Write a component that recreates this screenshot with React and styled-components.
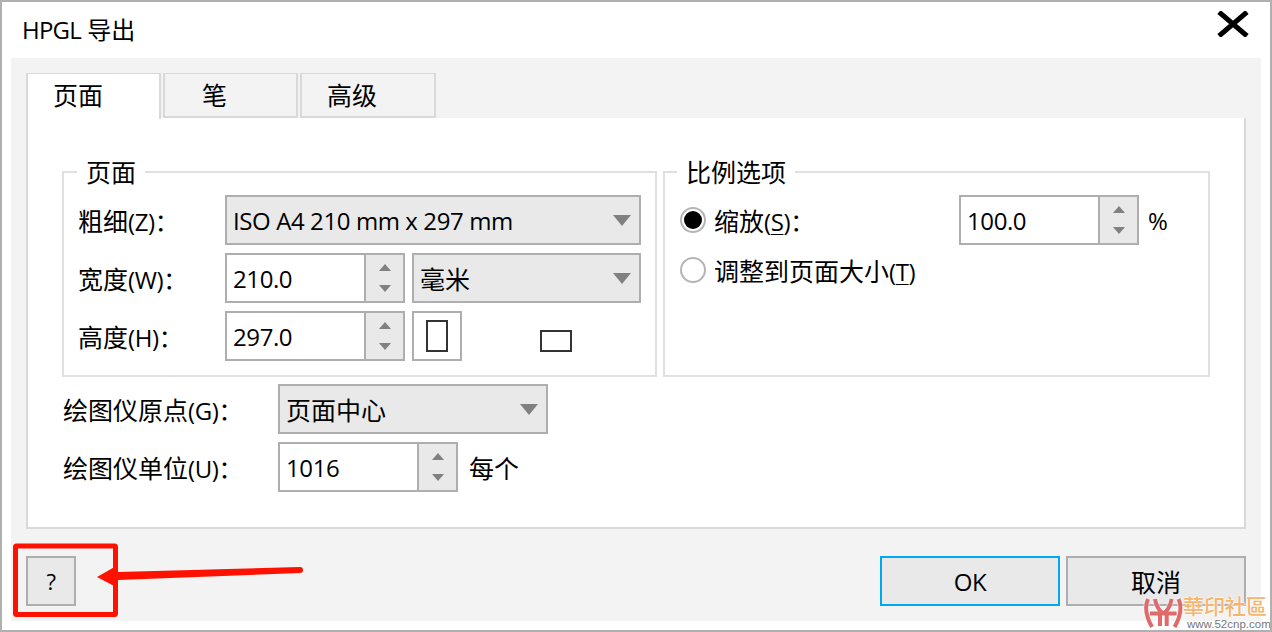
import React from 'react';
import styled, { createGlobalStyle } from 'styled-components';

const GlobalStyle = createGlobalStyle`
  html, body {
    margin: 0;
    padding: 0;
    background: #ffffff;
  }
  body {
    font-family: "Open Sans", "Noto Sans CJK SC", sans-serif;
    font-size: 25px;
    color: #000000;
  }
`;

const Latin = styled.span`
  font-size: ${(p) => p.$size || 24}px;
  letter-spacing: -0.4px;
`;

const Dialog = styled.div`
  position: relative;
  box-sizing: border-box;
  width: 1272px;
  height: 632px;
  border: 2px solid #b0b0b0;
  background: #ffffff;
  display: flex;
  flex-direction: column;
  overflow: hidden;
`;

const TitleBar = styled.div`
  height: 56px;
  flex: none;
  display: flex;
  align-items: center;
  justify-content: space-between;
  padding: 0 20px 0 20px;
`;

const Title = styled.div`
  font-size: 24px;
  line-height: 30px;
`;

const TitleLatin = styled.span`
  letter-spacing: -0.8px;
`;

const CloseIcon = styled.svg`
  width: 34px;
  height: 26px;
  margin-top: -12px;
`;

const Body = styled.div`
  flex: 1;
  margin: 0 9px 9px;
  padding: 15px 15px 0;
  background: #f3f3f3;
  display: flex;
  flex-direction: column;
`;

const Tabs = styled.div`
  display: flex;
  gap: 2px;
  height: 45px;
  flex: none;
`;

const Tab = styled.div`
  box-sizing: border-box;
  width: ${(p) => p.$width || 135}px;
  height: ${(p) => (p.$active ? 46 : 45)}px;
  position: relative;
  z-index: 1;
  border: 2px solid #d9d9d9;
  border-bottom: ${(p) => (p.$active ? 'none' : '2px solid #d9d9d9')};
  border-top-width: 1px;
  background: ${(p) => (p.$active ? '#ffffff' : '#f3f3f3')};
  display: flex;
  align-items: center;
  padding-left: ${(p) => p.$pad}px;
  padding-bottom: ${(p) => (p.$active ? 5 : 2)}px;
  font-size: 25px;
`;

const Panel = styled.div`
  box-sizing: border-box;
  height: 411px;
  flex: none;
  background: #ffffff;
  border: 2px solid #d9d9d9;
  border-top: none;
  padding: 40px 34px 0;
`;

const Groups = styled.div`
  display: flex;
  gap: 6px;
`;

const Group = styled.fieldset`
  box-sizing: border-box;
  margin: 0;
  padding: 9px 0 0 ${(p) => p.$pad}px;
  width: ${(p) => p.$width}px;
  height: 219px;
  border: 2px solid #e0e0e0;
  border-radius: 0;
  min-width: 0;
`;

const Legend = styled.legend`
  margin-left: ${(p) => p.$offset}px;
  padding: 0 9px;
  font-size: 25px;
  line-height: 28px;
  height: 28px;
`;

const Rows = styled.div`
  display: flex;
  flex-direction: column;
  gap: 8px;
`;

const Row = styled.div`
  display: flex;
  align-items: center;
  height: 50px;
`;

const Label = styled.div`
  width: ${(p) => p.$width}px;
  flex: none;
  white-space: nowrap;
`;

const Select = styled.div`
  box-sizing: border-box;
  width: ${(p) => p.$width}px;
  height: 50px;
  flex: none;
  margin-left: ${(p) => p.$gap || 0}px;
  border: 2px solid #aeaeae;
  background: #e9e9e9;
  padding: 0 8px 0 6px;
  display: flex;
  align-items: center;
  justify-content: space-between;
`;

const SelectCaret = styled.span`
  width: 0;
  height: 0;
  border-left: 9px solid transparent;
  border-right: 9px solid transparent;
  border-top: 11px solid #808080;
`;

const Spinner = styled.div`
  box-sizing: border-box;
  width: 180px;
  height: 50px;
  flex: none;
  border: 2px solid #aeaeae;
  background: #ffffff;
  display: flex;
`;

const SpinValue = styled.div`
  flex: 1;
  padding-left: 6px;
  line-height: 46px;
`;

const SpinButtons = styled.div`
  box-sizing: border-box;
  width: 39px;
  flex: none;
  border-left: 2px solid #aeaeae;
  background: #e9e9e9;
  display: flex;
  flex-direction: column;
  align-items: center;
  justify-content: space-between;
  padding: 9px 0;
`;

const SpinUp = styled.span`
  width: 0;
  height: 0;
  border-left: 6px solid transparent;
  border-right: 6px solid transparent;
  border-bottom: 7px solid #808080;
`;

const SpinDown = styled.span`
  width: 0;
  height: 0;
  border-left: 6px solid transparent;
  border-right: 6px solid transparent;
  border-top: 7px solid #808080;
`;

const OrientButton = styled.div`
  box-sizing: border-box;
  width: 50px;
  height: 50px;
  margin-left: 7px;
  flex: none;
  border: 2px solid #aeaeae;
  display: flex;
  align-items: center;
  justify-content: center;
`;

const PageShape = styled.div`
  box-sizing: border-box;
  width: ${(p) => p.$w}px;
  height: ${(p) => p.$h}px;
  border: 2px solid #333333;
`;

const LandscapeSlot = styled.div`
  margin-left: 78px;
  align-self: flex-end;
  margin-bottom: 9px;
`;

const RadioCircle = styled.span`
  box-sizing: border-box;
  width: 26px;
  height: 26px;
  flex: none;
  border-radius: 50%;
  border: 2px solid #b5b5b5;
  background: #ffffff;
  margin-right: 8px;
  display: flex;
  align-items: center;
  justify-content: center;
`;

const RadioDot = styled.span`
  width: 18px;
  height: 18px;
  border-radius: 50%;
  background: #000000;
`;

const Mnemonic = styled.span`
  text-decoration: underline;
  text-underline-offset: 3px;
  text-decoration-thickness: 1px;
`;

const ScaleLabel = styled.div`
  width: 245px;
  flex: none;
  white-space: nowrap;
`;

const Suffix = styled.div`
  margin-left: ${(p) => p.$gap}px;
`;

const FitRow = styled(Row)`
  margin-top: -8px;
`;

const BottomRows = styled(Rows)`
  margin-top: 7px;
  padding-left: 1px;
`;

const Footer = styled.div`
  display: flex;
  align-items: flex-start;
  justify-content: space-between;
  margin-top: 27px;
`;

const Actions = styled.div`
  display: flex;
  gap: 6px;
`;

const Button = styled.div`
  box-sizing: border-box;
  width: ${(p) => p.$width}px;
  height: 50px;
  border: 2px solid ${(p) => (p.$primary ? '#00a8f0' : '#aeaeae')};
  background: #e9e9e9;
  display: flex;
  align-items: center;
  justify-content: center;
`;

const Annotation = styled.svg`
  position: absolute;
  left: -2px;
  top: -2px;
  width: 1272px;
  height: 632px;
  pointer-events: none;
`;

const Watermark = styled.div`
  position: absolute;
  right: 0;
  bottom: 0;
  width: 128px;
  height: 36px;
`;

const WatermarkLogo = styled.svg`
  position: absolute;
  left: 0;
  top: 0;
  width: 44px;
  height: 36px;
  filter: drop-shadow(0 0 1px #ffffff);
`;

const WatermarkName = styled.div`
  position: absolute;
  left: 41px;
  top: 0;
  font-family: "Noto Sans CJK TC", sans-serif;
  font-size: 21px;
  font-weight: 500;
  line-height: 22px;
  white-space: nowrap;
  color: #f6b56c;
  text-shadow: 0 0 2px #ffffff, 0 0 2px #ffffff;
`;

const WatermarkUrl = styled.div`
  position: absolute;
  left: 45px;
  top: 24px;
  font-family: "Liberation Sans", sans-serif;
  font-size: 11.5px;
  line-height: 12px;
  white-space: nowrap;
  color: #777777;
  text-shadow: 0 0 2px #ffffff, 0 0 2px #ffffff;
`;

const NumberSpinner = ({ value }) => (
  <Spinner>
    <SpinValue>
      <Latin>{value}</Latin>
    </SpinValue>
    <SpinButtons>
      <SpinUp />
      <SpinDown />
    </SpinButtons>
  </Spinner>
);

const Dropdown = ({ width, gap, children }) => (
  <Select $width={width} $gap={gap}>
    <span>{children}</span>
    <SelectCaret />
  </Select>
);

const App = () => {
  return (
    <Dialog>
      <GlobalStyle />
      <TitleBar>
        <Title>
          <TitleLatin>HPGL</TitleLatin> 导出
        </Title>
        <CloseIcon viewBox="0 0 34 26">
          <path d="M3 1 L31 25 M31 1 L3 25" stroke="#000000" strokeWidth="5" fill="none" />
        </CloseIcon>
      </TitleBar>
      <Body>
        <Tabs>
          <Tab $active $pad={25}>页面</Tab>
          <Tab $pad={37}>笔</Tab>
          <Tab $width={136} $pad={25}>高级</Tab>
        </Tabs>
        <Panel>
          <Groups>
            <Group $width={595} $pad={14}>
              <Legend $offset={-1}>页面</Legend>
              <Rows>
                <Row>
                  <Label $width={147}>粗细<Latin>(Z)：</Latin></Label>
                  <Dropdown width={416}><Latin>ISO A4 210 mm x 297 mm</Latin></Dropdown>
                </Row>
                <Row>
                  <Label $width={147}>宽度<Latin>(W)：</Latin></Label>
                  <NumberSpinner value="210.0" />
                  <Dropdown width={229} gap={7}>毫米</Dropdown>
                </Row>
                <Row>
                  <Label $width={147}>高度<Latin>(H)：</Latin></Label>
                  <NumberSpinner value="297.0" />
                  <OrientButton>
                    <PageShape $w={22} $h={32} />
                  </OrientButton>
                  <LandscapeSlot>
                    <PageShape $w={32} $h={22} />
                  </LandscapeSlot>
                </Row>
              </Rows>
            </Group>
            <Group $width={547} $pad={15}>
              <Legend $offset={-3}>比例选项</Legend>
              <Rows>
                <Row>
                  <RadioCircle>
                    <RadioDot />
                  </RadioCircle>
                  <ScaleLabel>
                    缩放<Latin>(<Mnemonic>S</Mnemonic>)：</Latin>
                  </ScaleLabel>
                  <NumberSpinner value="100.0" />
                  <Suffix $gap={9}><Latin>%</Latin></Suffix>
                </Row>
                <FitRow>
                  <RadioCircle />
                  <div>
                    调整到页面大小<Latin>(<Mnemonic>T</Mnemonic>)</Latin>
                  </div>
                </FitRow>
              </Rows>
            </Group>
          </Groups>
          <BottomRows>
            <Row>
              <Label $width={215}>绘图仪原点<Latin>(G)：</Latin></Label>
              <Dropdown width={270}>页面中心</Dropdown>
            </Row>
            <Row>
              <Label $width={215}>绘图仪单位<Latin>(U)：</Latin></Label>
              <NumberSpinner value="1016" />
              <Suffix $gap={11}>每个</Suffix>
            </Row>
          </BottomRows>
        </Panel>
        <Footer>
          <Button $width={50}><Latin $size={22}>?</Latin></Button>
          <Actions>
            <Button $width={180} $primary><Latin>OK</Latin></Button>
            <Button $width={180}>取消</Button>
          </Actions>
        </Footer>
      </Body>
      <Annotation viewBox="0 0 1272 632">
        <rect x="15.5" y="546" width="100" height="68.5" rx="1" fill="none" stroke="#ff1100" strokeWidth="5" />
        <path d="M118 572 L300 567 A3 3 0 0 1 300 573 L118 580 Z" fill="#ff1100" />
        <path d="M97 577 L118 565 L118 588 Z" fill="#ff1100" />
      </Annotation>
      <Watermark>
        <WatermarkLogo viewBox="0 0 44 36">
          <path
            d="M6 5 C2 14 5 24 10 33 M36.6 5 C40.6 14 37.6 24 32.6 33 M13 5 C14 12 18 18 21.3 19 C24.6 18 28.6 12 29.6 5 M8 19.5 L34.6 19.5 M18 21 L18 32 M24.7 21 L24.7 32"
            stroke="#e06a6a"
            strokeWidth="4"
            fill="none"
          />
        </WatermarkLogo>
        <WatermarkName>華印社區</WatermarkName>
        <WatermarkUrl>www.52cnp.com</WatermarkUrl>
      </Watermark>
    </Dialog>
  );
};

export default App;
